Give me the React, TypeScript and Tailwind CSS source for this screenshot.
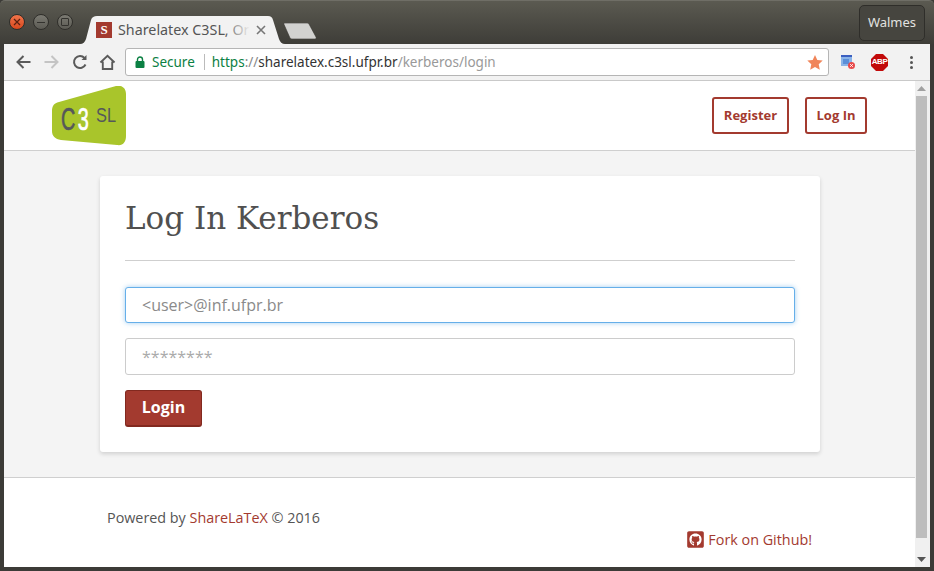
import { FaGithubSquare } from "react-icons/fa"

const uiFont = "font-['Noto_Sans',sans-serif]"
const pageFont = "font-['Open_Sans',sans-serif]"

function WindowButton({ color, children }: { color: string; children: React.ReactNode }) {
  return (
    <div className={`w-4 h-4 rounded-full flex items-center justify-center border border-[#2f2e2a] ${color}`}>
      {children}
    </div>
  )
}

function TitleBar() {
  return (
    <div className="relative h-[44px] shrink-0 flex items-start bg-gradient-to-b from-[#5b5a51] to-[#3e3d38] rounded-t-[5px] border-t border-[#6f6e66]">
      <div className="flex gap-2 ml-[9px] mt-[13px] w-[72px]">
        <WindowButton color="bg-gradient-to-b from-[#f0744a] to-[#d9481c]">
          <svg width="8" height="8" viewBox="0 0 8 8" stroke="#5a2010" strokeWidth="1.2"><path d="M1 1l6 6M7 1l-6 6" /></svg>
        </WindowButton>
        <WindowButton color="bg-gradient-to-b from-[#7b7a72] to-[#5c5b54]">
          <div className="w-2 h-px bg-[#33322e]" />
        </WindowButton>
        <WindowButton color="bg-gradient-to-b from-[#7b7a72] to-[#5c5b54]">
          <div className="w-2 h-2 border border-[#33322e] rounded-[1px]" />
        </WindowButton>
      </div>

      {/* Active tab */}
      <div className="relative w-[205px] h-[28px] mt-[15px] -ml-[1px] shrink-0">
        <svg className="absolute inset-0" width="205" height="28" viewBox="0 0 205 28">
          <path d="M0 28C3 28 5 26 6 23L11 4C12 1 14 0 17 0H188C191 0 192 1 193 4L199 23C200 26 202 28 205 28Z" fill="#f2f2f2" />
        </svg>
        <div className="relative flex items-center h-full pl-[16px]">
          <div className="w-4 h-4 shrink-0 bg-[#a33a2f] flex items-center justify-center text-white text-[13px] font-bold font-['Liberation_Serif',serif]">S</div>
          <div className={`${uiFont} relative w-[134px] ml-[6px] whitespace-nowrap text-[14.3px] text-[#555] leading-none`}>
            Sharelatex C3SL, Or
            <div className="absolute inset-y-0 right-[2px] w-[26px] bg-gradient-to-r from-transparent to-[#f2f2f2]" />
          </div>
          <svg className="ml-[4px]" width="10" height="10" viewBox="0 0 10 10" stroke="#777" strokeWidth="1.6"><path d="M1 1l8 8M9 1l-8 8" /></svg>
        </div>
      </div>

      {/* New tab button */}
      <svg className="mt-[22px] -ml-[2px]" width="34" height="16" viewBox="0 0 34 16">
        <path d="M1 1.500C.5 .6 1 0 2 0H24C25 0 25.500 .4 26 1L33 14C33.500 15 33 16 32 16H9C8 16 7.500 15.500 7 15Z" fill="#d2d2d0" stroke="#35342f" strokeWidth="0.6" />
      </svg>

      <div className={`${uiFont} ml-auto mr-[9px] mt-[4px] w-[66px] h-[36px] flex items-center justify-center rounded-[5px] border border-[#2f2e2a] bg-[#46453f] text-[13px] text-[#e2e2e0]`}>
        Walmes
      </div>
    </div>
  )
}

function Toolbar() {
  return (
    <div className="h-[36px] shrink-0 flex items-center bg-[#f2f2f2] border-b border-[#c9c9c9] box-content">
      <svg className="ml-[12px]" width="16" height="16" viewBox="0 0 16 16" fill="none" stroke="#5a5a5a" strokeWidth="2"><path d="M14.500 8H1.500M7.500 2L1.500 8l6 6" /></svg>
      <svg className="ml-[12px]" width="16" height="16" viewBox="0 0 16 16" fill="none" stroke="#c4c4c4" strokeWidth="2"><path d="M.5 8h13M7.500 2l6 6-6 6" /></svg>
      <svg className="ml-[12px]" width="16" height="16" viewBox="0 0 16 16" fill="none" stroke="#5a5a5a" strokeWidth="2"><path d="M13.500 10.500A6 6 0 1 1 12.500 4" /><path d="M14.500 1v5h-5" fill="#5a5a5a" stroke="none" /></svg>
      <svg className="ml-[11px]" width="17" height="16" viewBox="0 0 18 17" fill="none" stroke="#5a5a5a" strokeWidth="2"><path d="M1.500 9L9 2l7.500 7M4 8v8h10V8" /></svg>

      <div className={`${uiFont} ml-[9px] w-[704px] h-[28px] flex items-center bg-white rounded-[3px] border border-[#b5b5b5] text-[13.5px] whitespace-nowrap`}>
        <svg className="ml-[9px]" width="10" height="12" viewBox="0 0 10 12"><path d="M2.500 5V3.500a2.500 2.500 0 0 1 5 0V5" fill="none" stroke="#0b8043" strokeWidth="1.400" /><rect x="0.500" y="5" width="9" height="7" rx="1" fill="#0b8043" /></svg>
        <span className="ml-[7px] text-[#0b8043]">Secure</span>
        <div className="ml-[9px] w-px h-[16px] bg-[#bbb]" />
        <span className="ml-[7px] text-[#0b8043]">https</span>
        <span className="text-[#888]">://</span>
        <span className="text-[#333]">sharelatex.c3sl.ufpr.br</span>
        <span className="text-[#999]">/kerberos/login</span>
        <svg className="ml-auto mr-[5px]" width="16" height="15" viewBox="0 0 16 15"><path d="M8 0l2.300 5 5.400.6-4 3.700 1.100 5.400L8 12l-4.800 2.700 1.100-5.400-4-3.700L5.700 5z" fill="#f0855a" /></svg>
      </div>

      <svg className="ml-[11px]" width="16" height="16" viewBox="0 0 16 16">
        <rect x="1" y="1" width="11" height="11" fill="#8ab4e8" />
        <rect x="1" y="1" width="11" height="2" fill="#3b5fc0" />
        <rect x="3" y="5" width="6" height="5" fill="#5b8fd8" />
        <circle cx="11.500" cy="11.500" r="3.500" fill="#e84a4a" />
        <path d="M10.200 10.200l2.600 2.600M12.800 10.200l-2.600 2.600" stroke="#fff" strokeWidth="1" />
      </svg>
      <div className="relative ml-[15px] w-[17px] h-[17px]">
        <svg className="absolute inset-0" width="17" height="17" viewBox="0 0 17 17"><path d="M5 0h7l5 5v7l-5 5H5l-5-5V5z" fill="#c20a0a" /></svg>
        <div className="absolute inset-0 flex items-center justify-center text-white text-[8px] font-bold font-['Liberation_Sans',sans-serif] tracking-tighter">ABP</div>
      </div>
      <div className="ml-[22px] flex flex-col gap-[2px]">
        <div className="w-[3px] h-[3px] rounded-full bg-[#555]" />
        <div className="w-[3px] h-[3px] rounded-full bg-[#555]" />
        <div className="w-[3px] h-[3px] rounded-full bg-[#555]" />
      </div>
    </div>
  )
}

function Logo() {
  return (
    <svg width="74" height="60" viewBox="0 0 74 60">
      <path d="M0 25C0 20 2 17 7 16L64 0C70 -1 74 2 74 8V50C74 56 71 60 65 59L9 54C3 53 0 50 0 45Z" fill="#a9c52b" />
      <text transform="translate(9 44) scale(0.62 1)" fontFamily="'Liberation Sans',sans-serif" fontSize="32" strokeWidth="0.7">
        <tspan fill="#55585a" stroke="#55585a">C</tspan>
        <tspan dx="4" fill="#ffffff" stroke="#ffffff">3</tspan>
      </text>
      <text x="44" y="36" fontFamily="'Liberation Sans',sans-serif" fontSize="21" fill="#55585a" textLength="20" lengthAdjust="spacingAndGlyphs">SL</text>
    </svg>
  )
}

function NavButton({ label, width }: { label: string; width: string }) {
  return (
    <a className={`${width} h-[37px] flex items-center justify-center border-2 border-[#a33a2f] rounded-[3px] text-[#a33a2f] text-[13px] font-bold`}>
      {label}
    </a>
  )
}

export default function App() {
  return (
    <div className={`w-[934px] h-[571px] overflow-hidden flex flex-col bg-[#3c3b37] ${pageFont}`}>
      <TitleBar />
      <div className="mx-[4px] flex-1 flex flex-col min-h-0">
        <Toolbar />
        <div className="h-[486px] flex bg-white">
          <div className="w-[911px] flex flex-col">
            <nav className="h-[70px] shrink-0 flex bg-white border-b border-[#cfcfcf]">
              <div className="ml-[48px] mt-[5px]"><Logo /></div>
              <div className="ml-auto mr-[48px] mt-[16px] flex gap-[16px]">
                <NavButton label="Register" width="w-[77px]" />
                <NavButton label="Log In" width="w-[62px]" />
              </div>
            </nav>

            <main className="h-[326px] shrink-0 bg-[#f4f4f4] px-[96px] pt-[25px]">
              <div className="w-[720px] h-[276px] bg-white rounded-[3px] shadow-[0_2px_4px_rgba(0,0,0,0.15)] px-[25px] pt-[22px]">
                <h1 className="font-['DejaVu_Serif',serif] text-[31px] leading-[40px] text-[#505050]">Log In Kerberos</h1>
                <hr className="mt-[22px] border-[#cfcfcf]" />
                <input
                  placeholder="<user>@inf.ufpr.br"
                  className="mt-[26px] block w-full h-[36px] px-[16px] bg-white rounded-[3px] border border-[#66afe9] shadow-[0_0_5px_rgba(102,175,233,0.6)] text-[16px] placeholder:text-[#8a8a8a] outline-none"
                />
                <input
                  placeholder="********"
                  className="mt-[15px] block w-full h-[37px] px-[16px] bg-white rounded-[3px] border border-[#cccccc] text-[16px] placeholder:text-[#aaaaaa] outline-none"
                />
                <button className="mt-[15px] block w-[77px] h-[37px] pb-[2px] bg-[#a33a2f] rounded-[3px] border border-[#82291f] border-b-2 text-white text-[16px] font-bold">
                  Login
                </button>
              </div>
            </main>

            <footer className="flex-1 border-t border-[#cfcfcf] bg-white text-[14.35px] text-[#555] relative">
              <p className="ml-[103px] mt-[30px] leading-[20px]">
                Powered by <a className="text-[#a33a2f]">ShareLaTeX</a> © 2016
              </p>
              <a className="flex items-center justify-end mr-[103px] mt-[1px] text-[#a33a2f]">
                <FaGithubSquare className="text-[19px] mr-[3px]" />
                Fork on Github!
              </a>
            </footer>
          </div>

          {/* Scrollbar */}
          <div className="w-[15px] shrink-0 flex flex-col items-center pr-[2px] bg-[#f0f0f0]">
            <svg className="mt-[5px]" width="9" height="5" viewBox="0 0 9 5"><path d="M4.500 0L9 5H0z" fill="#a0a0a0" /></svg>
            <div className="mt-[5px] w-[11px] h-[442px] bg-[#bdbdbd]" />
            <svg className="mt-auto mb-[5px]" width="9" height="5" viewBox="0 0 9 5"><path d="M4.500 5L9 0H0z" fill="#555" /></svg>
          </div>
        </div>
      </div>
    </div>
  )
}
